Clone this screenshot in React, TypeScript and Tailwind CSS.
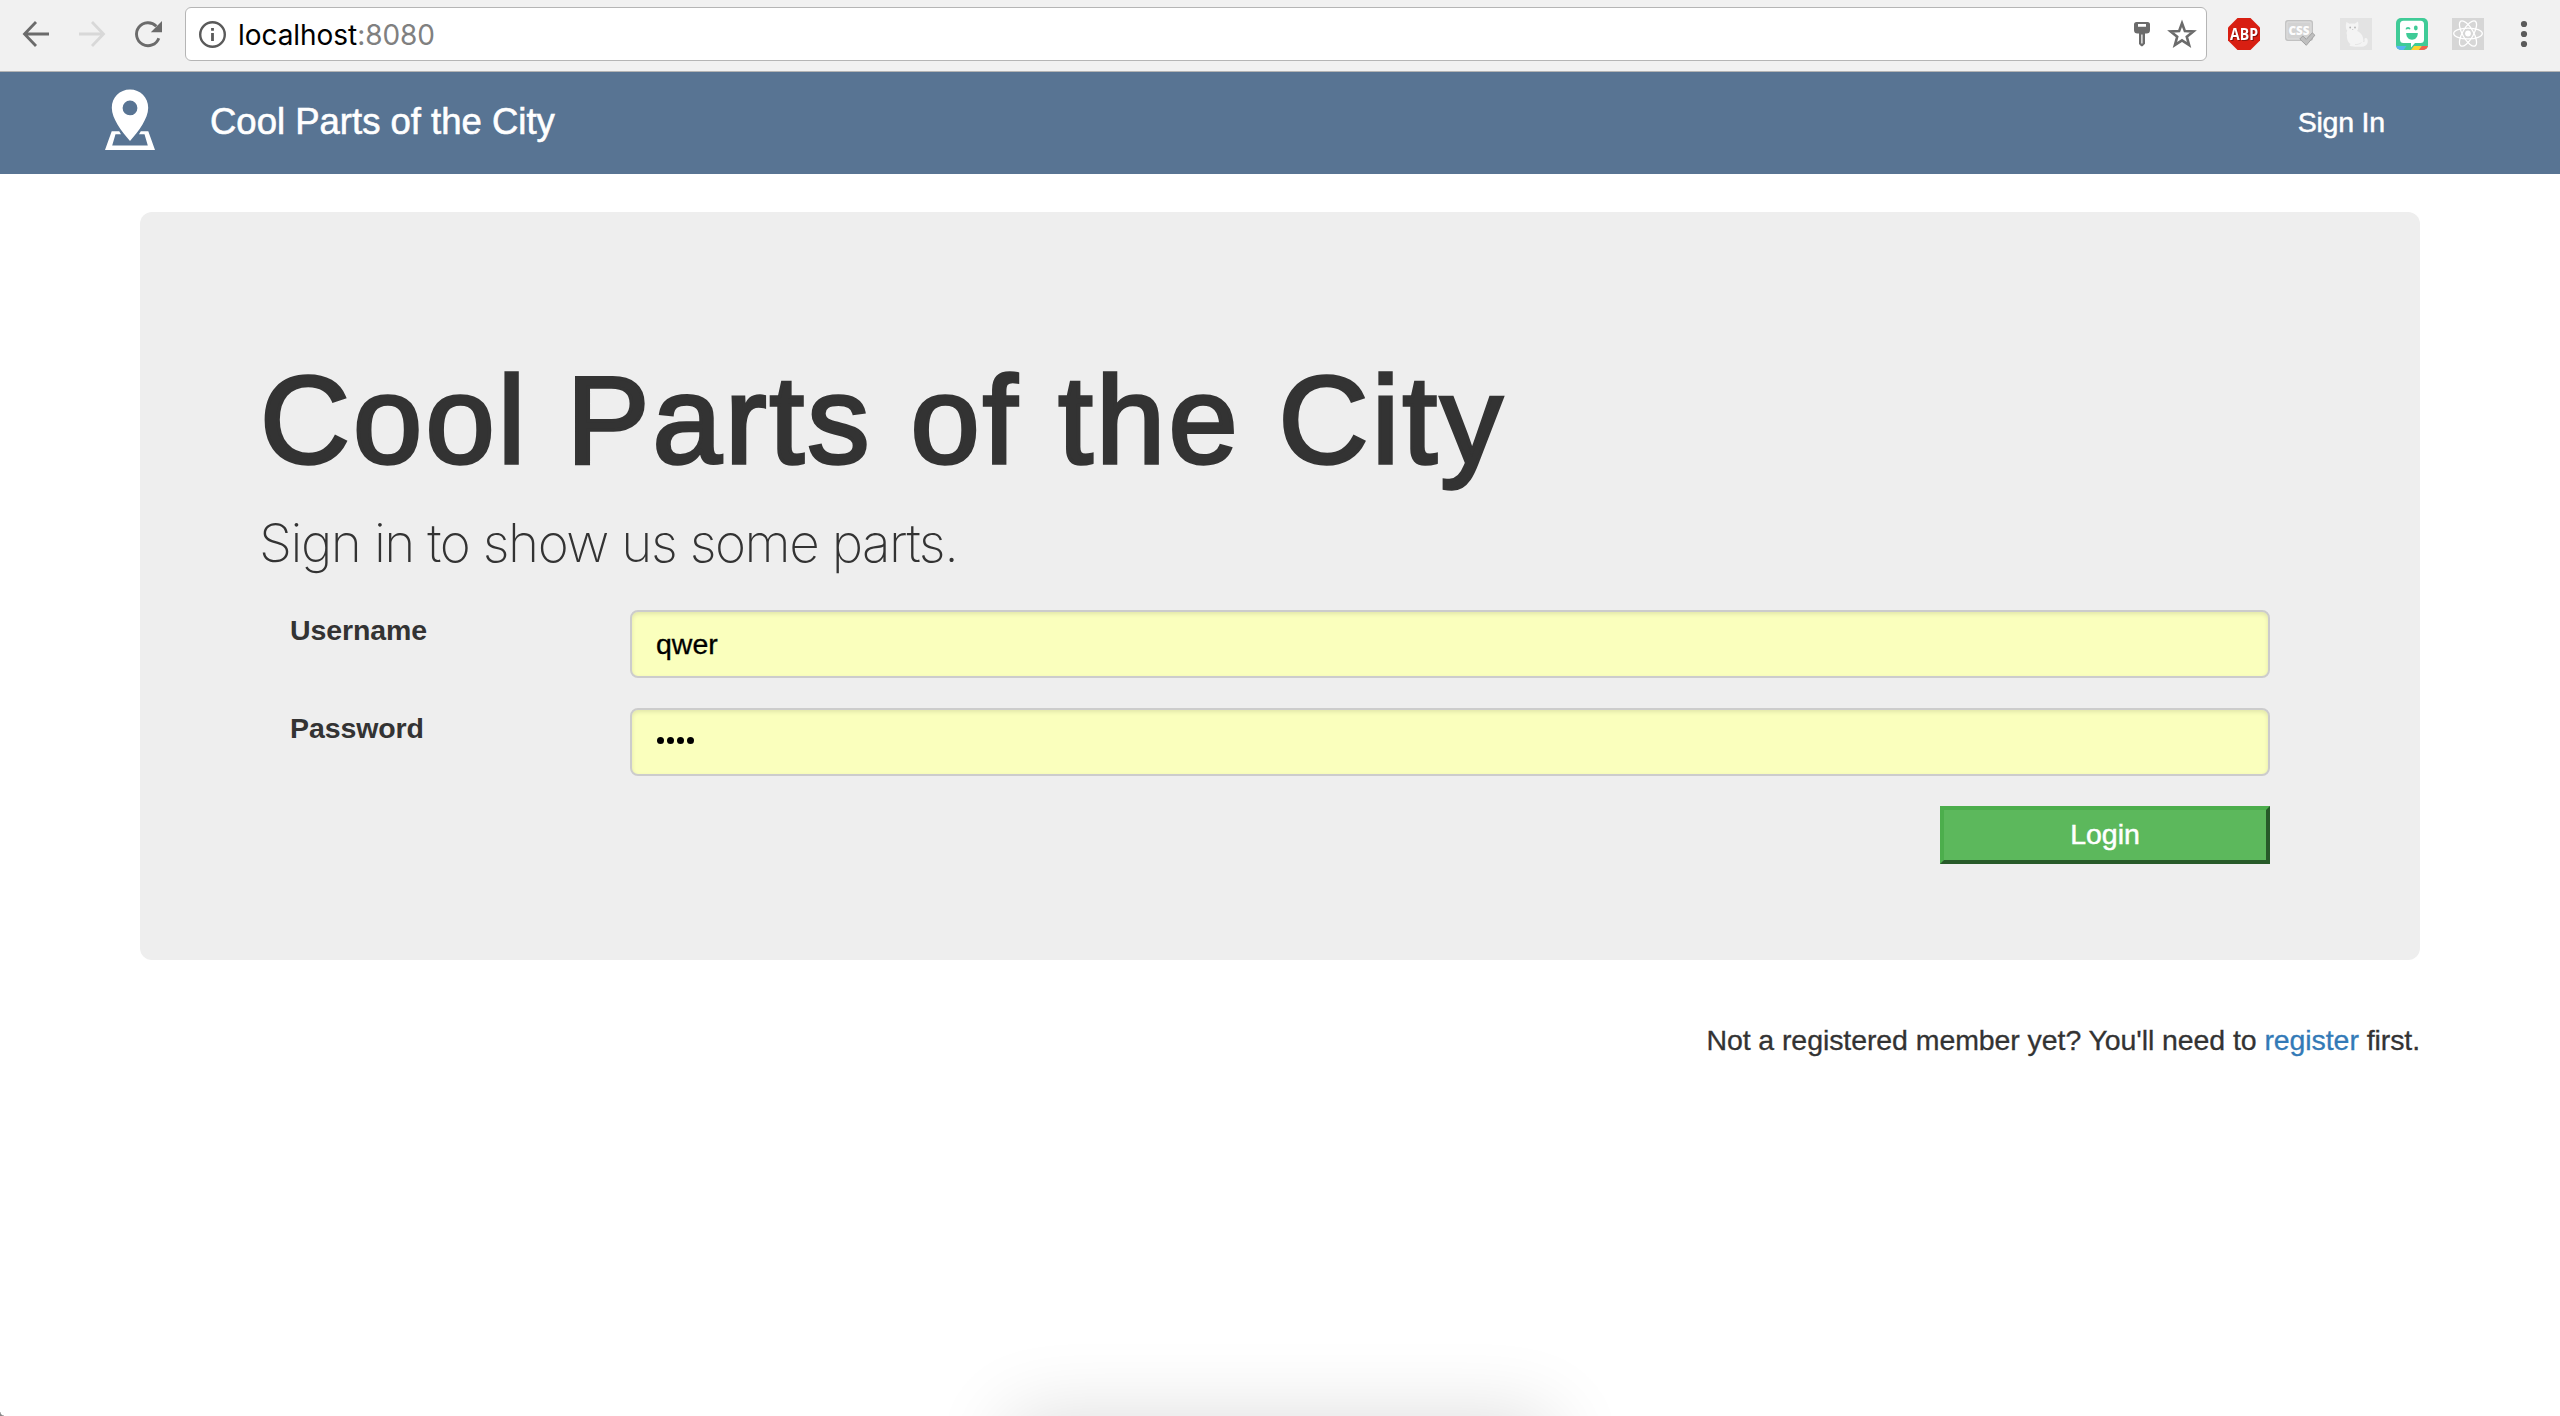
import type { ReactNode } from "react";

function BackIcon() {
  return (
    <svg className="h-[30px] w-[30px] shrink-0" viewBox="0 0 30 30" fill="none" stroke="#6b6b6b" strokeWidth="2.8">
      <path d="M29 15H4.500M16 3L4.500 15 16 27" />
    </svg>
  );
}

function ForwardIcon() {
  return (
    <svg className="h-[30px] w-[30px] shrink-0" viewBox="0 0 30 30" fill="none" stroke="#d8d8d8" strokeWidth="2.8">
      <path d="M3 15h24.500M16 3l11.500 12L16 27" />
    </svg>
  );
}

function ReloadIcon() {
  return (
    <svg className="h-[30px] w-[30px] shrink-0" viewBox="0 0 30 30">
      <path d="M24.300 7.200A11.500 11.500 0 1 0 26.800 19.200" fill="none" stroke="#6b6b6b" strokeWidth="2.9" />
      <path d="M30 2v11.200H18.800z" fill="#6b6b6b" />
    </svg>
  );
}

function InfoIcon() {
  return (
    <svg className="h-[28px] w-[28px] shrink-0" viewBox="0 0 28 28">
      <circle cx="14.500" cy="14.500" r="12.300" fill="none" stroke="#5a5a5a" strokeWidth="2.400" />
      <path d="M13.100 8h2.800v2.800h-2.800zM13.100 13h2.800v8h-2.800z" fill="#5a5a5a" />
    </svg>
  );
}

function KeyIcon() {
  return (
    <svg className="h-[25px] w-[16px] shrink-0" viewBox="0 0 16 25">
      <path
        fillRule="evenodd"
        d="M2.500 0h11A2.500 2.500 0 0 1 16 2.500V8a3.500 3.500 0 0 1-3.500 3.500H11v10.300L8.600 24.200H7.200L5 22V11.500H3.500A3.500 3.500 0 0 1 0 8V2.500A2.500 2.500 0 0 1 2.500 0zM4 2v2.800h8V2zM7.300 12.500v9h1.200v-9z"
        fill="#6b6b6b"
      />
    </svg>
  );
}

function StarIcon() {
  return (
    <svg className="h-[30px] w-[30px] shrink-0" viewBox="0 0 30 30">
      <path
        d="M15 4.200l2.900 7.900 8.500.4-6.600 5.300 2.300 8.300L15 21.400l-7.100 4.700 2.300-8.300-6.600-5.300 8.500-.4z"
        fill="none"
        stroke="#6b6b6b"
        strokeWidth="2.600"
        strokeMiterlimit="10"
      />
    </svg>
  );
}

function AdblockIcon() {
  return (
    <svg className="h-[32px] w-[32px] shrink-0 overflow-visible" viewBox="0 0 32 32">
      <path d="M9.500 0h13L32 9.500v13L22.500 32h-13L0 22.500v-13z" fill="#d81f12" />
      <text
        className="drop-shadow-[1px_1px_0px_#8c120a]"
        x="16"
        y="21.500"
        textAnchor="middle"
        fontFamily="Open Sans, sans-serif"
        fontWeight="700"
        fontSize="16"
        textLength="28"
        lengthAdjust="spacingAndGlyphs"
        fill="#fff"
      >
        ABP
      </text>
    </svg>
  );
}

function CssIcon() {
  return (
    <svg className="h-[32px] w-[32px] shrink-0" viewBox="0 0 32 32">
      <rect x="1.800" y="2.800" width="26.500" height="19.500" rx="2" fill="#d2d2d2" stroke="#c2c2c2" strokeWidth="1.400" />
      <rect x="3" y="4" width="24" height="17" rx="1" fill="none" stroke="#dedede" />
      <text x="15" y="16.500" textAnchor="middle" fontFamily="Open Sans, sans-serif" fontWeight="800" fontSize="12.500" textLength="21" lengthAdjust="spacingAndGlyphs" fill="#fcfcfc">
        CSS
      </text>
      <path d="M15.800 21l3-3 3.500 3.300 6-6.500 2.600 2.400-8.600 10.100z" fill="#bfbfbf" stroke="#a2a2a2" strokeWidth="1" />
    </svg>
  );
}

function CatIcon() {
  return (
    <svg className="h-[32px] w-[32px] shrink-0" viewBox="0 0 32 32">
      <rect width="32" height="32" fill="#e3e3e3" />
      <path
        d="M6.500 4l3 1.800c1.700-.5 3.600-.5 5.200 0L18 3.500c.5 2.500.6 4.500.2 6.300 0 1.600-.7 2.500-1.200 3.200 3.500 1.200 6 4.500 6.300 8.500.2 1 .1 1.800-.3 2.500 1.500.2 2-.7 1.500-1.800-.4-1.300.3-2.400 1.500-2.200 1.500.4 2 2.200 1.700 4.200-.5 2.800-2.800 4.500-6.500 4.500-5 .2-8 .1-11-.7-1-.5-.5-1.500.3-1.700C7.500 24 6.500 20.500 7 17c-.8-1.500-.5-3 .3-4.200C5.300 10.500 5.600 7 6.500 4z"
        fill="#f4f4f4"
      />
      <path d="M15 26.500c2.500.3 5-.6 6.500-2" fill="none" stroke="#e6e6e6" />
      <circle cx="10.200" cy="9.500" r=".9" fill="#b5b5b5" />
      <circle cx="15" cy="9.500" r=".9" fill="#b5b5b5" />
      <path d="M12 11.500h1.300" stroke="#cfcfcf" />
    </svg>
  );
}

function BitmojiIcon() {
  return (
    <svg className="h-[32px] w-[32px] shrink-0" viewBox="0 0 32 32">
      <clipPath id="bitmoji-tile">
        <rect width="32" height="32" rx="5" />
      </clipPath>
      <g clipPath="url(#bitmoji-tile)">
        <rect width="32" height="32" fill="#3fcb97" />
        <path d="M0 28h10.500l-3 4H0z" fill="#56b4ef" />
        <path d="M18 28h8l-3 4h-8z" fill="#fdd32f" />
        <path d="M26 28h6v4h-9z" fill="#f2604d" />
        <path d="M7.500 2.800h17a3.500 3.500 0 0 1 3.500 3.500v15.200a3.500 3.500 0 0 1-3.500 3.500H19l-4 4.500V25H7.500A3.500 3.500 0 0 1 4 21.500V6.300a3.500 3.500 0 0 1 3.500-3.500z" fill="#fff" />
        <path d="M10.200 15h11.600c0 4-2.300 6.700-5.800 6.700S10.200 19 10.200 15z" fill="#3fcb97" />
        <ellipse cx="19.800" cy="10" rx="1.900" ry="2.400" fill="#3fcb97" />
        <path d="M10.300 11.300c.4-2 3-2 3.500 0" fill="none" stroke="#3fcb97" strokeWidth="1.700" />
      </g>
    </svg>
  );
}

function ReactIcon() {
  return (
    <svg className="h-[32px] w-[32px] shrink-0" viewBox="0 0 32 32">
      <rect width="32" height="32" fill="#d6d6d6" />
      <g fill="none" stroke="#fff" strokeWidth="1.300">
        <ellipse cx="16" cy="15.500" rx="14.300" ry="5.400" />
        <ellipse cx="16" cy="15.500" rx="14.300" ry="5.400" transform="rotate(60 16 15.500)" />
        <ellipse cx="16" cy="15.500" rx="14.300" ry="5.400" transform="rotate(120 16 15.500)" />
      </g>
      <circle cx="16" cy="15.500" r="2.900" fill="#fff" />
    </svg>
  );
}

function MenuDots() {
  return (
    <svg className="h-[28px] w-[8px] shrink-0" viewBox="0 0 8 28" fill="#5a5a5a">
      <circle cx="4" cy="4" r="3.100" />
      <circle cx="4" cy="14" r="3.100" />
      <circle cx="4" cy="24" r="3.100" />
    </svg>
  );
}

function PinLogo() {
  return (
    <svg className="h-[62px] w-[52px] shrink-0" viewBox="0 0 52 62" fill="#fff">
      <path
        fillRule="evenodd"
        d="M26 1.500c10.300 0 18.200 8 18.200 18.300 0 6-2.500 11.200-5.700 16.700C35 42.500 30 48 26 53c-4-5-9-10.500-12.500-16.500-3.200-5.500-5.700-10.700-5.700-16.700C7.800 9.500 15.700 1.500 26 1.500zm0 11a7.400 7.400 0 1 0 0 14.800 7.400 7.400 0 0 0 0-14.800z"
      />
      <path d="M7.700 43.300h7.500l1.800 2.900h-5.500L8.200 57.400h35.600l-3.300-11.200H35l1.800-2.900h7.500L51 62H1z" />
    </svg>
  );
}

function BrowserToolbar() {
  return (
    <div className="flex h-[72px] items-start border-b border-[#b4b4b4] bg-[#f1f1f1] pl-[20px]">
      <div className="flex h-[68px] items-center gap-[26px]">
        <BackIcon />
        <ForwardIcon />
        <ReloadIcon />
      </div>
      <div className="mt-[7px] ml-[23px] flex h-[54px] w-[2022px] items-center rounded-[6px] border border-[#b5b5b5] bg-white pl-[12px]">
        <InfoIcon />
        <div className="mt-[2px] ml-[12px] flex-1 font-[Inter,sans-serif] text-[28px] leading-[40px] tracking-[-0.05px] text-black">
          localhost<span className="text-[#808080]">:8080</span>
        </div>
        <div className="flex items-center gap-[17px] pr-[9px]">
          <KeyIcon />
          <StarIcon />
        </div>
      </div>
      <div className="ml-[21px] flex h-[68px] items-center gap-[24px]">
        <AdblockIcon />
        <CssIcon />
        <CatIcon />
        <BitmojiIcon />
        <ReactIcon />
        <div className="ml-[12px] flex">
          <MenuDots />
        </div>
      </div>
    </div>
  );
}

function SiteNav() {
  return (
    <nav className="flex h-[102px] items-start bg-[#587493] text-white">
      <div className="mt-[16px] ml-[104px] flex">
        <PinLogo />
      </div>
      <div className="mt-[25px] ml-[54px] text-[36.5px] leading-[50px] [-webkit-text-stroke:0.6px_#fff]">
        Cool Parts of the City
      </div>
      <a className="mt-[30px] mr-[175px] ml-auto leading-[40px] tracking-[-0.2px] [-webkit-text-stroke:0.5px_#fff]">Sign In</a>
    </nav>
  );
}

function Field({ label, children }: { label: string; children: ReactNode }) {
  return (
    <div className="flex h-[68px] items-start">
      <label className="w-[340px] leading-[40px] font-bold tracking-[-0.1px]">{label}</label>
      <div className="flex h-[68px] w-[1640px] items-center rounded-[8px] border-2 border-[#ccc] bg-[#faffbd] pl-[24px] text-black shadow-[inset_0_2px_4px_rgba(0,0,0,0.1)]">
        {children}
      </div>
    </div>
  );
}

function PasswordDots() {
  return (
    <div className="flex gap-[3px] pb-[3px] pl-[1px]">
      <i className="size-[7px] rounded-full bg-black" />
      <i className="size-[7px] rounded-full bg-black" />
      <i className="size-[7px] rounded-full bg-black" />
      <i className="size-[7px] rounded-full bg-black" />
    </div>
  );
}

export default function App() {
  return (
    <div className="relative h-[1416px] w-[2560px] overflow-hidden bg-white font-['Liberation_Sans',Arial,sans-serif] text-[28.5px] text-[#333]">
      <BrowserToolbar />
      <SiteNav />
      <main className="mx-auto w-[2280px] pt-[38px]">
        <section className="h-[748px] rounded-[12px] bg-[#eee] px-[120px] pt-[139px]">
          <h1 className="text-[124.5px] leading-[138px] tracking-[3.15px] whitespace-nowrap [-webkit-text-stroke:3.4px_#333]">
            Cool Parts of the City
          </h1>
          <p className="mt-[17px] ml-[-1px] font-[Inter,sans-serif] text-[53px] leading-[75px] font-extralight tracking-[-1.470px]">
            Sign in to show us some parts.
          </p>
          <form className="mt-[29px] flex flex-col gap-[30px] pl-[30px]">
            <Field label="Username">
              <span className="leading-[40px] [-webkit-text-stroke:0.3px_#000]">qwer</span>
            </Field>
            <Field label="Password">
              <PasswordDots />
            </Field>
            <button
              type="button"
              className="ml-[1650px] h-[58px] w-[330px] border-4 border-t-[#4cae4c] border-r-[#275a29] border-b-[#275a29] border-l-[#4cae4c] bg-[#5cb85c] pb-[2px] leading-[40px] text-white [-webkit-text-stroke:0.5px_#fff]"
            >
              Login
            </button>
          </form>
        </section>
        <p className="mt-[60px] text-right leading-[40px] tracking-[-0.08px] [-webkit-text-stroke:0.3px]">
          Not a registered member yet? You'll need to <a className="text-[#337ab7]">register</a> first.
        </p>
      </main>
      <div className="absolute top-[1416px] left-[1010px] h-[120px] w-[540px] shadow-[0_0_80px_rgba(0,0,0,0.14)]" />
      <div className="absolute bottom-0 left-0 size-[4px] bg-[radial-gradient(circle_at_top_right,transparent_3px,#888_4px)]" />
    </div>
  );
}
